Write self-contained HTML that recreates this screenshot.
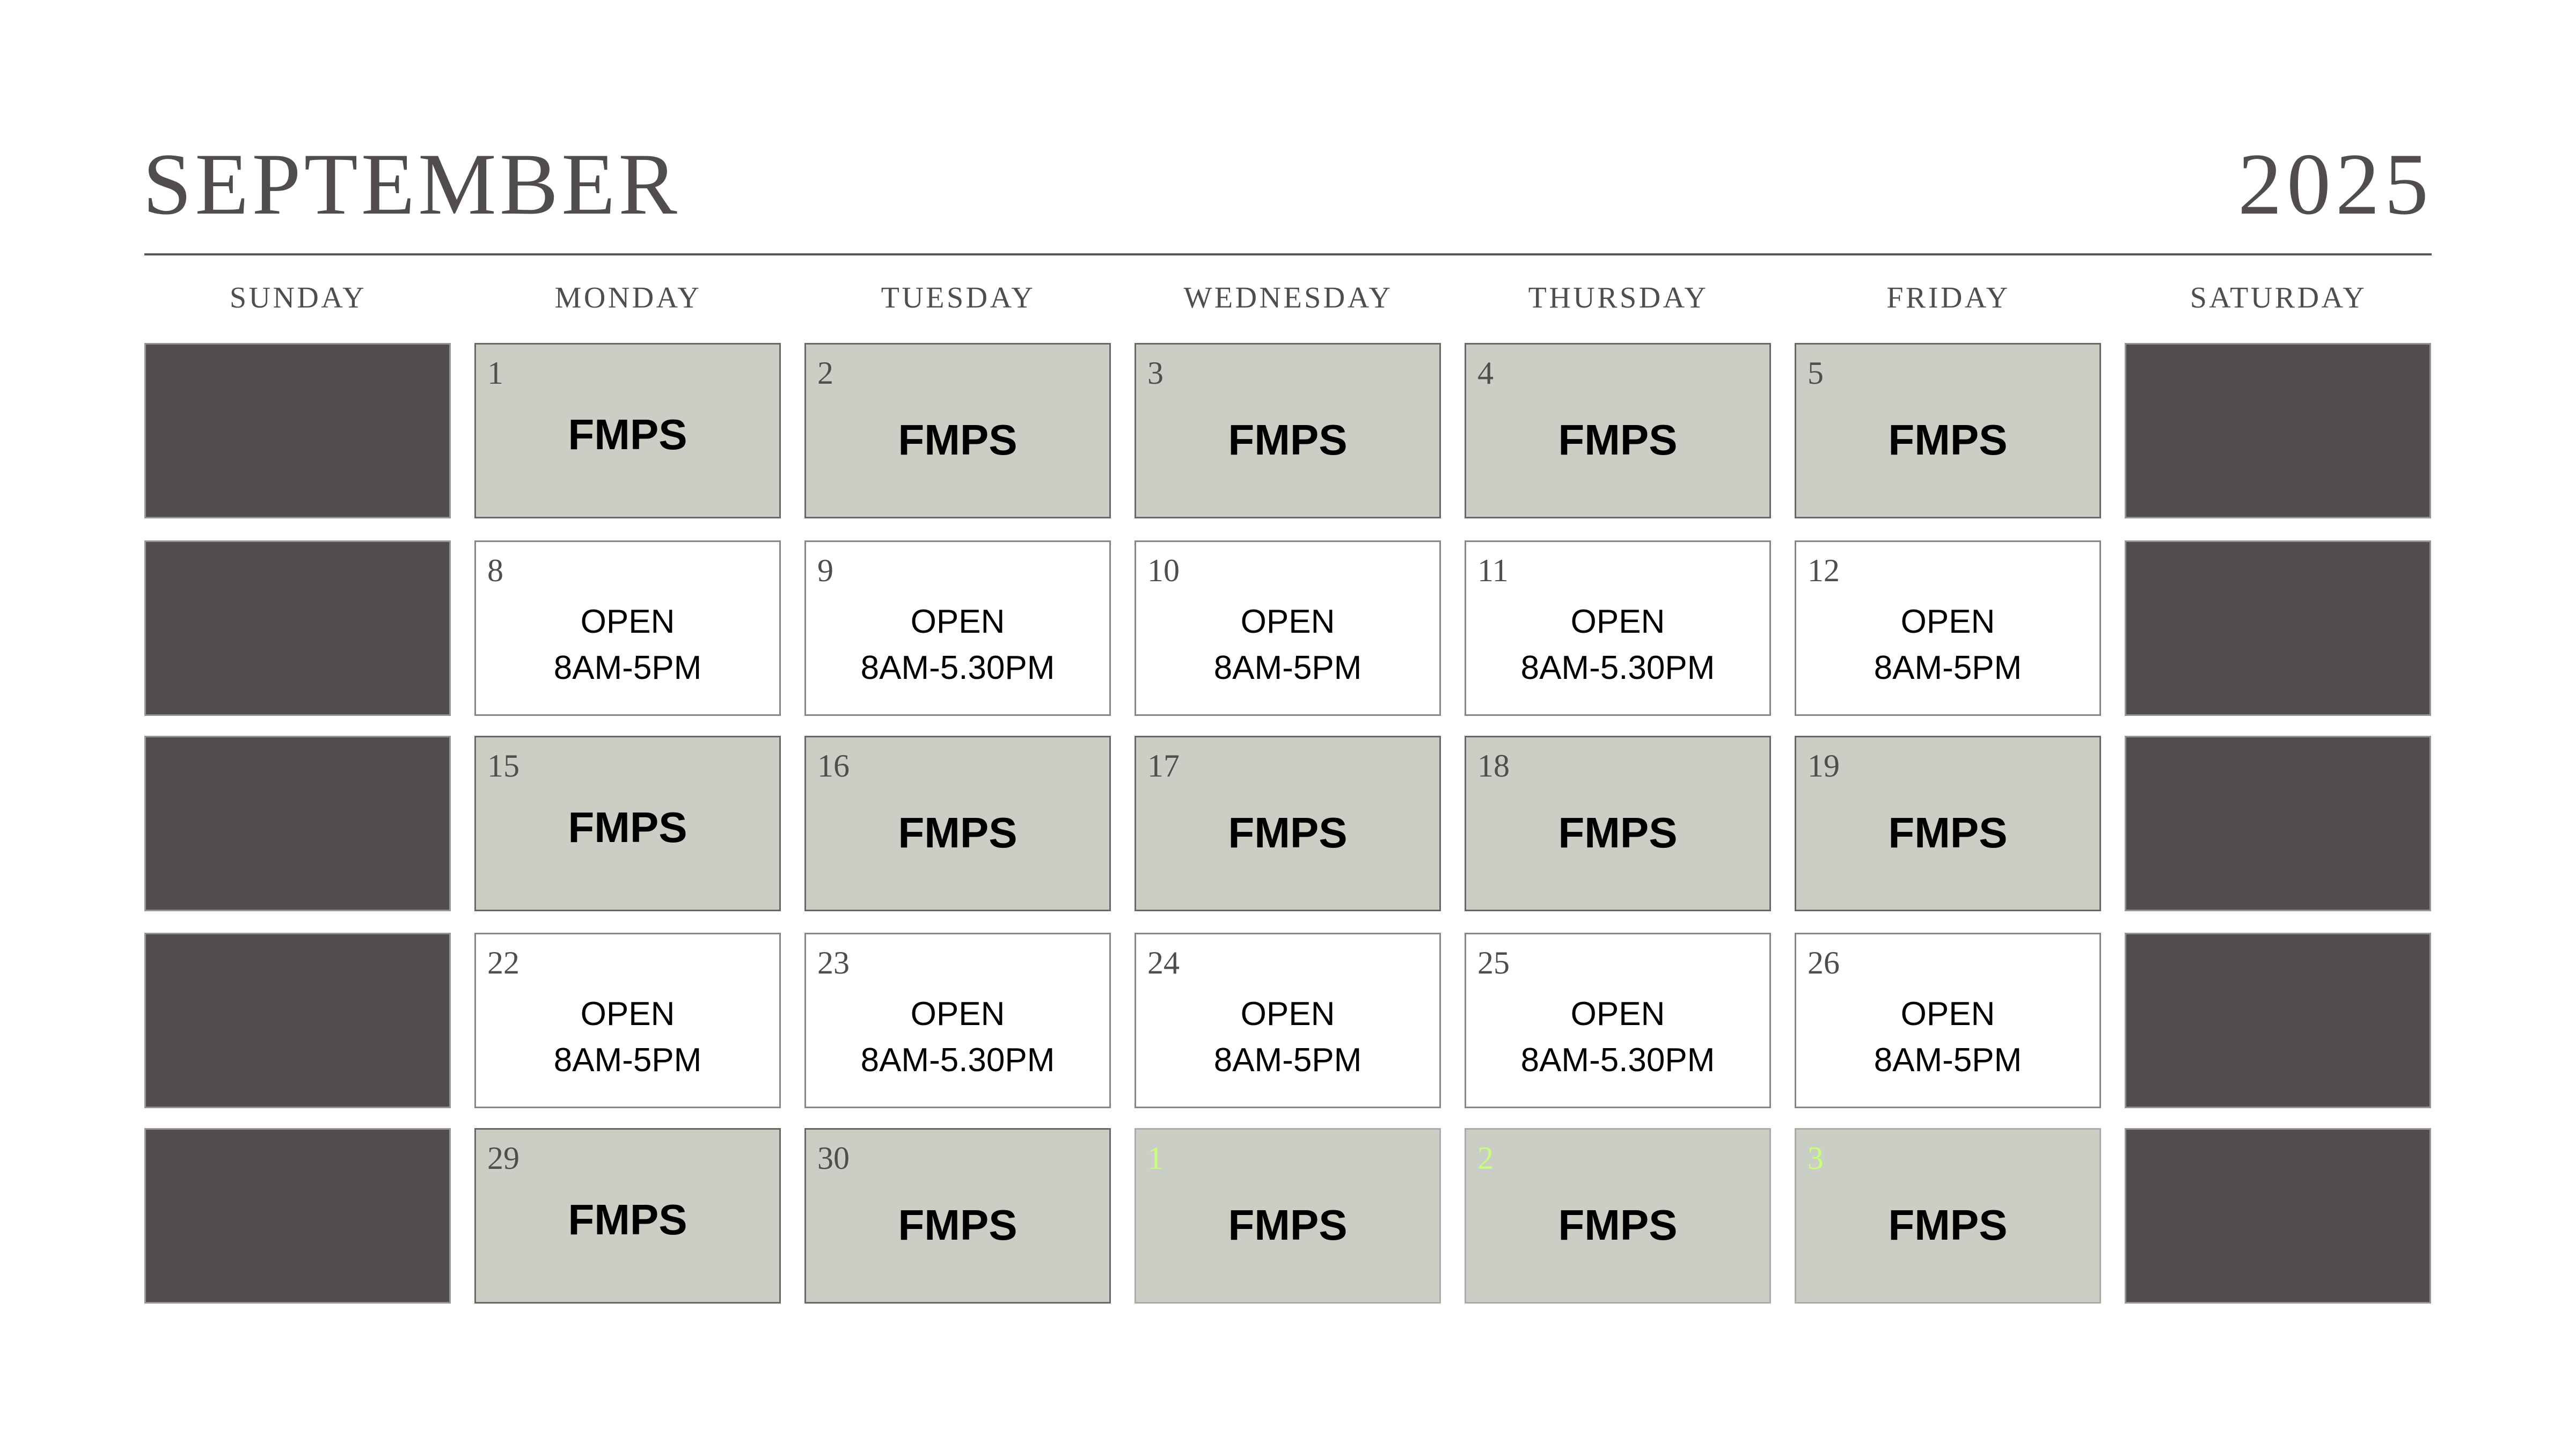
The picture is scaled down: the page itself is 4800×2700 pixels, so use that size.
<!DOCTYPE html>
<html><head><meta charset="utf-8"><style>
*{margin:0;padding:0;box-sizing:border-box}
body{width:4800px;height:2700px;background:#fff;position:relative;overflow:hidden;font-family:"Liberation Sans",sans-serif}
.t{position:absolute;font-family:"Liberation Serif",serif;color:#524d4d;font-size:164px;letter-spacing:6px;line-height:1}
.line{position:absolute;left:269px;top:472px;width:4262px;height:4px;background:#5a5555}
.dh{position:absolute;top:527px;width:571px;text-align:center;font-family:"Liberation Serif",serif;color:#524d4d;font-size:56px;letter-spacing:4.5px;line-height:1}
.c{position:absolute;width:571px;height:327px;border:3px solid #6b6767}
.d{background:#524d4d;border-color:#9a9393}
.g{background:#cbcec5}
.gl{background:#cbcec5;border-color:#b0a9a9}
.w{background:#fff;border-color:#8a8686}
.n{position:absolute;left:21px;top:23px;font-family:"Liberation Serif",serif;font-size:60px;color:#524d4d;line-height:1}
.gn{color:#c8ff7a}
.f{position:absolute;left:0;right:0;top:138px;text-align:center;font-weight:bold;font-size:80px;line-height:1;color:#000}
.o{position:absolute;left:0;right:0;top:106px;text-align:center;font-size:62px;line-height:86px;color:#000}
</style></head><body>
<div class="t" style="left:266px;top:262px">SEPTEMBER</div>
<div class="t" style="right:266px;top:262px;letter-spacing:9px">2025</div>
<div class="line"></div>
<div class="dh" style="left:270px">SUNDAY</div>
<div class="dh" style="left:885px">MONDAY</div>
<div class="dh" style="left:1500px">TUESDAY</div>
<div class="dh" style="left:2115px">WEDNESDAY</div>
<div class="dh" style="left:2730px">THURSDAY</div>
<div class="dh" style="left:3345px">FRIDAY</div>
<div class="dh" style="left:3960px">SATURDAY</div>

<div class="c d" style="left:269px;top:639px"></div>
<div class="c g" style="left:884px;top:639px"><div class="n">1</div><div class="f" style="top:128px">FMPS</div></div>
<div class="c g" style="left:1499px;top:639px"><div class="n">2</div><div class="f">FMPS</div></div>
<div class="c g" style="left:2114px;top:639px"><div class="n">3</div><div class="f">FMPS</div></div>
<div class="c g" style="left:2729px;top:639px"><div class="n">4</div><div class="f">FMPS</div></div>
<div class="c g" style="left:3344px;top:639px"><div class="n">5</div><div class="f">FMPS</div></div>
<div class="c d" style="left:3959px;top:639px"></div>

<div class="c d" style="left:269px;top:1007px"></div>
<div class="c w" style="left:884px;top:1007px"><div class="n">8</div><div class="o">OPEN<br>8AM-5PM</div></div>
<div class="c w" style="left:1499px;top:1007px"><div class="n">9</div><div class="o">OPEN<br>8AM-5.30PM</div></div>
<div class="c w" style="left:2114px;top:1007px"><div class="n">10</div><div class="o">OPEN<br>8AM-5PM</div></div>
<div class="c w" style="left:2729px;top:1007px"><div class="n">11</div><div class="o">OPEN<br>8AM-5.30PM</div></div>
<div class="c w" style="left:3344px;top:1007px"><div class="n">12</div><div class="o">OPEN<br>8AM-5PM</div></div>
<div class="c d" style="left:3959px;top:1007px"></div>

<div class="c d" style="left:269px;top:1371px"></div>
<div class="c g" style="left:884px;top:1371px"><div class="n">15</div><div class="f" style="top:128px">FMPS</div></div>
<div class="c g" style="left:1499px;top:1371px"><div class="n">16</div><div class="f">FMPS</div></div>
<div class="c g" style="left:2114px;top:1371px"><div class="n">17</div><div class="f">FMPS</div></div>
<div class="c g" style="left:2729px;top:1371px"><div class="n">18</div><div class="f">FMPS</div></div>
<div class="c g" style="left:3344px;top:1371px"><div class="n">19</div><div class="f">FMPS</div></div>
<div class="c d" style="left:3959px;top:1371px"></div>

<div class="c d" style="left:269px;top:1738px"></div>
<div class="c w" style="left:884px;top:1738px"><div class="n">22</div><div class="o">OPEN<br>8AM-5PM</div></div>
<div class="c w" style="left:1499px;top:1738px"><div class="n">23</div><div class="o">OPEN<br>8AM-5.30PM</div></div>
<div class="c w" style="left:2114px;top:1738px"><div class="n">24</div><div class="o">OPEN<br>8AM-5PM</div></div>
<div class="c w" style="left:2729px;top:1738px"><div class="n">25</div><div class="o">OPEN<br>8AM-5.30PM</div></div>
<div class="c w" style="left:3344px;top:1738px"><div class="n">26</div><div class="o">OPEN<br>8AM-5PM</div></div>
<div class="c d" style="left:3959px;top:1738px"></div>

<div class="c d" style="left:269px;top:2102px"></div>
<div class="c g" style="left:884px;top:2102px"><div class="n">29</div><div class="f" style="top:128px">FMPS</div></div>
<div class="c g" style="left:1499px;top:2102px"><div class="n">30</div><div class="f">FMPS</div></div>
<div class="c gl" style="left:2114px;top:2102px"><div class="n gn">1</div><div class="f">FMPS</div></div>
<div class="c gl" style="left:2729px;top:2102px"><div class="n gn">2</div><div class="f">FMPS</div></div>
<div class="c gl" style="left:3344px;top:2102px"><div class="n gn">3</div><div class="f">FMPS</div></div>
<div class="c d" style="left:3959px;top:2102px"></div>
</body></html>
